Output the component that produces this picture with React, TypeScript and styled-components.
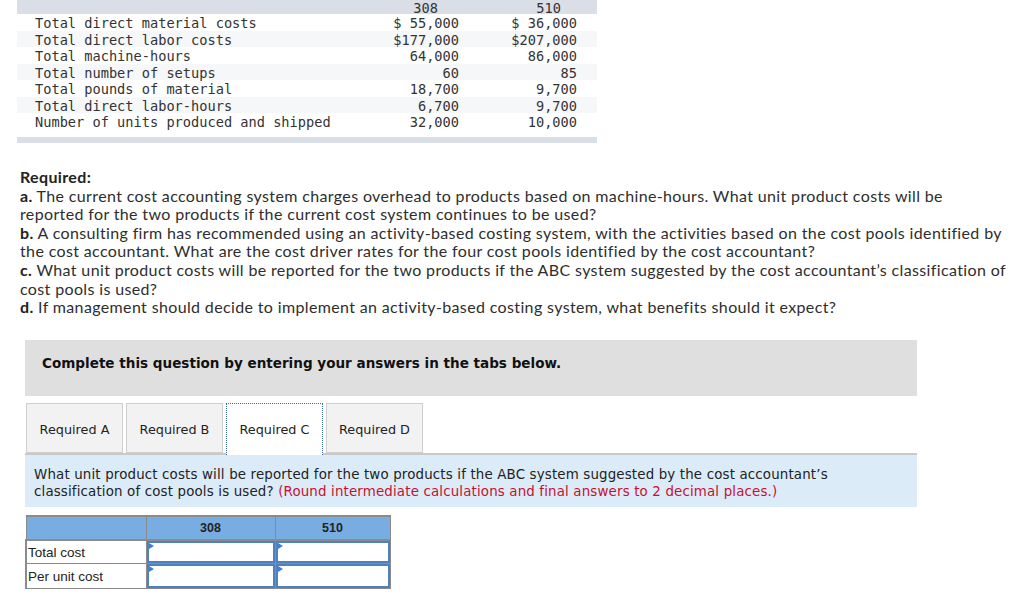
import React from "react";
import styled, { createGlobalStyle } from "styled-components";

const Global = createGlobalStyle`
  html, body { margin: 0; padding: 0; background: #fff; }
  body { width: 1024px; height: 598px; overflow: hidden; }
`;

const Page = styled.div`
  display: flex;
  flex-direction: column;
  width: 1024px;
`;

/* ---------- top data table ---------- */
const DataTable = styled.div`
  margin-left: 17px;
  width: 580px;
  font-family: "DejaVu Sans Mono", "Liberation Mono", monospace;
  font-size: 13.65px;
  color: #333;
`;

const HeadBand = styled.div`
  display: grid;
  grid-template-columns: 363px 90px 127px;
  height: 14px;
  box-sizing: border-box;
  padding-top: 1px;
  line-height: 14px;
  background: #dadfe7;
`;

const HeadCell = styled.div<{ $pad: number }>`
  text-align: right;
  padding-right: ${(p) => p.$pad}px;
`;

const DataRow = styled.div<{ $shade?: boolean }>`
  display: grid;
  grid-template-columns: 363px 90px 127px;
  height: 16.5px;
  box-sizing: border-box;
  padding-top: 1px;
  line-height: 16.5px;
  background: ${(p) => (p.$shade ? "#f6f7f9" : "#fff")};
`;

const LabelText = styled.div`
  padding-left: 18px;
  white-space: pre;
`;

const NumText = styled.div<{ $pad: number }>`
  text-align: right;
  padding-right: ${(p) => p.$pad}px;
  white-space: pre;
`;

const FootBand = styled.div`
  margin-top: 7.5px;
  height: 6px;
  background: #dadfe7;
`;

/* ---------- required text ---------- */
const Questions = styled.div`
  margin: 25px 0 0 20px;
  font-family: Lato, "Open Sans", sans-serif;
  font-size: 16px;
  letter-spacing: 0.36px;
  line-height: 18.6px;
  color: #2e2e2e;
  white-space: nowrap;
`;

const Para = styled.p`
  margin: 0;
`;

const Strong = styled.b`
  font-weight: 700;
  color: #222;
`;

/* ---------- instruction box ---------- */
const Instruction = styled.div`
  margin: 23px 0 0 25px;
  width: 892px;
  height: 56px;
  box-sizing: border-box;
  padding: 0 0 9px 17px;
  display: flex;
  align-items: center;
  background: #dfdfdf;
  font-family: "DejaVu Sans", Verdana, sans-serif;
  font-weight: 700;
  font-size: 13.55px;
  color: #111;
`;

/* ---------- tabs ---------- */
const TabRow = styled.div`
  margin: 7px 0 0 26px;
  display: flex;
  gap: 3px;
  position: relative;
  z-index: 1;
`;

const Tab = styled.button<{ $active?: boolean }>`
  width: 97px;
  height: ${(p) => (p.$active ? "52px" : "50px")};
  margin-bottom: ${(p) => (p.$active ? "-2px" : "0")};
  box-sizing: border-box;
  padding: ${(p) => (p.$active ? "3px 0 2px" : "3px 0 0")};
  background: ${(p) => (p.$active ? "#fff" : "#f2f2f2")};
  border: ${(p) => (p.$active ? "1px dotted #3d6aa6" : "1px solid #cfcfcf")};
  border-bottom: ${(p) => (p.$active ? "none" : "1px solid #cfcfcf")};
  font-family: "DejaVu Sans", Verdana, sans-serif;
  font-size: 12.8px;
  color: #222;
  display: flex;
  align-items: center;
  justify-content: center;
`;

const Panel = styled.div`
  margin-left: 25px;
  width: 892px;
  box-sizing: border-box;
  height: 54px;
  border-top: 2px solid #c9c9c9;
  background: #dcebf8;
  padding: 11px 0 0 9px;
  font-family: "DejaVu Sans", Verdana, sans-serif;
  font-size: 13.4px;
  letter-spacing: 0.15px;
  line-height: 17px;
  color: #222;
  white-space: nowrap;
`;

const Hint = styled.span`
  color: #c8102e;
`;

/* ---------- answer table ---------- */
const AnswerTable = styled.table`
  margin: 8px 0 0 25px;
  width: 364px;
  table-layout: fixed;
  border-collapse: collapse;
  font-family: "Liberation Sans", Arial, sans-serif;
  font-size: 13.5px;
  color: #222;
`;

const TH = styled.th`
  height: 24px;
  padding: 0;
  box-sizing: border-box;
  background: #78ade2;
  border: 1px solid #8b8b8b;
  border-width: 2px 1px 2px 1px;
  font-weight: 700;
  font-size: 12.5px;
  color: #222;
  text-align: center;
`;

const LabelTD = styled.td<{ $h: number }>`
  height: ${(p) => p.$h}px;
  padding: 0 0 0 1px;
  box-sizing: border-box;
  border: 1px solid #8b8b8b;
  border-left-width: 2px;
  text-align: left;
  overflow: hidden;
  white-space: nowrap;
`;

const InputTD = styled.td<{ $h: number }>`
  height: ${(p) => p.$h}px;
  padding: 0;
  box-sizing: border-box;
  border: 1px solid #8b8b8b;
`;

const FieldWrap = styled.div`
  position: relative;
  height: 100%;
  box-sizing: border-box;
  border: 2px solid #4f80c0;
  background: #fff;
  &::before {
    content: "";
    position: absolute;
    left: 0;
    top: 0;
    border-left: 5px solid #3c7fd6;
    border-top: 3px solid transparent;
    border-bottom: 3px solid transparent;
  }
`;

const Field = styled.input`
  display: block;
  width: 100%;
  height: 100%;
  min-width: 0;
  box-sizing: border-box;
  border: none;
  outline: none;
  background: transparent;
  padding: 0 4px;
  font-family: "Liberation Sans", Arial, sans-serif;
  font-size: 13px;
`;

const ColLabel = styled.col`
  width: 120px;
`;
const ColA = styled.col`
  width: 129px;
`;
const ColB = styled.col`
  width: 115px;
`;

const rows: [string, string, string, boolean][] = [
  ["Total direct material costs", "$ 55,000", "$ 36,000", false],
  ["Total direct labor costs", "$177,000", "$207,000", true],
  ["Total machine-hours", "64,000", "86,000", false],
  ["Total number of setups", "60", "85", true],
  ["Total pounds of material", "18,700", "9,700", false],
  ["Total direct labor-hours", "6,700", "9,700", true],
  ["Number of units produced and shipped", "32,000", "10,000", false],
];

export default function App() {
  return (
    <Page>
      <Global />
      <DataTable>
        <HeadBand>
          <div />
          <HeadCell $pad={32}>308</HeadCell>
          <HeadCell $pad={36}>510</HeadCell>
        </HeadBand>
        {rows.map(([label, a, b, shade]) => (
          <DataRow key={label} $shade={shade}>
            <LabelText>{label}</LabelText>
            <NumText $pad={11}>{a}</NumText>
            <NumText $pad={20}>{b}</NumText>
          </DataRow>
        ))}
        <FootBand />
      </DataTable>

      <Questions>
        <Para>
          <Strong>Required:</Strong>
        </Para>
        <Para>
          <Strong>a.</Strong> The current cost accounting system charges overhead to products based on
          machine-hours. What unit product costs will be
          <br />
          reported for the two products if the current cost system continues to be used?
        </Para>
        <Para>
          <Strong>b.</Strong> A consulting firm has recommended using an activity-based costing system,
          with the activities based on the cost pools identified by
          <br />
          the cost accountant. What are the cost driver rates for the four cost pools identified by the
          cost accountant?
        </Para>
        <Para>
          <Strong>c.</Strong> What unit product costs will be reported for the two products if the ABC
          system suggested by the cost accountant’s classification of
          <br />
          cost pools is used?
        </Para>
        <Para>
          <Strong>d.</Strong> If management should decide to implement an activity-based costing system,
          what benefits should it expect?
        </Para>
      </Questions>

      <Instruction>Complete this question by entering your answers in the tabs below.</Instruction>

      <TabRow>
        <Tab>Required A</Tab>
        <Tab>Required B</Tab>
        <Tab $active>Required C</Tab>
        <Tab>Required D</Tab>
      </TabRow>

      <Panel>
        What unit product costs will be reported for the two products if the ABC system suggested by
        the cost accountant’s
        <br />
        classification of cost pools is used?{" "}
        <Hint>(Round intermediate calculations and final answers to 2 decimal places.)</Hint>
      </Panel>

      <AnswerTable>
        <colgroup>
          <ColLabel />
          <ColA />
          <ColB />
        </colgroup>
        <thead>
          <tr>
            <TH />
            <TH>308</TH>
            <TH>510</TH>
          </tr>
        </thead>
        <tbody>
          <tr>
            <LabelTD $h={24}>Total cost</LabelTD>
            <InputTD $h={24}>
              <FieldWrap>
                <Field type="text" aria-label="308 total cost" />
              </FieldWrap>
            </InputTD>
            <InputTD $h={24}>
              <FieldWrap>
                <Field type="text" aria-label="510 total cost" />
              </FieldWrap>
            </InputTD>
          </tr>
          <tr>
            <LabelTD $h={25}>Per unit cost</LabelTD>
            <InputTD $h={25}>
              <FieldWrap>
                <Field type="text" aria-label="308 per unit cost" />
              </FieldWrap>
            </InputTD>
            <InputTD $h={25}>
              <FieldWrap>
                <Field type="text" aria-label="510 per unit cost" />
              </FieldWrap>
            </InputTD>
          </tr>
        </tbody>
      </AnswerTable>
    </Page>
  );
}
